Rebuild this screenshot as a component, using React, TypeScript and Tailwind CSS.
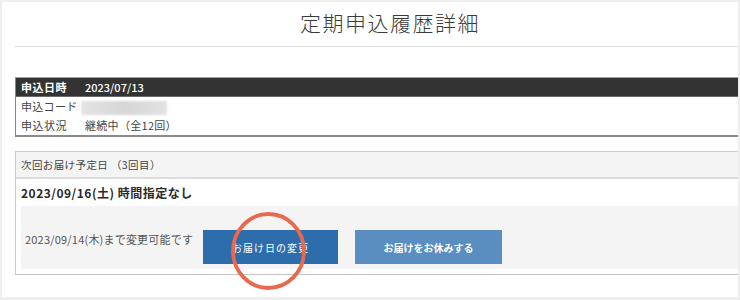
import React from "react";

export default function App() {
  return (
    <div className="w-[740px] h-[300px] bg-[#eeeeee] pt-[2px] pl-[2px] font-['Noto_Sans_CJK_JP','Noto_Sans',sans-serif] text-[#333]">
      <div className="relative h-[295px] w-[736px] bg-white overflow-hidden">
        <div className="pl-[13px]">
          <div className="h-[44px] flex items-center pl-[285px] pb-[3px]">
            <h1 className="text-[21px] leading-none tracking-[1.5px] font-light text-[#3a3a3a]">
              定期申込履歴詳細
            </h1>
          </div>
          <div className="h-px bg-[#dedede]" />

          <div className="mt-[30px] border-t border-t-[#a0a0a0] border-l border-l-[#888] border-b-2 border-b-[#8a8a8a]">
            <div className="h-[19px] bg-[#333] border-b border-b-[#6a6a6a] flex items-center text-white text-[11px] font-bold">
              <div className="w-[69px] pl-[5px] tracking-[0.5px]">申込日時</div>
              <div className="font-medium">2023/07/13</div>
            </div>
            <div className="h-[19px] flex items-center text-[11px] text-[#444]">
              <div className="w-[69px] pl-[5px] tracking-[0.3px]">申込コード</div>
              <div className="h-[14px] w-[86px] -ml-[4px] mt-[2px] rounded-[2px] bg-gradient-to-r from-[#e4e4e4] via-[#d6d6d6] to-[#e2e2e2] blur-[1px]" />
            </div>
            <div className="h-[19px] flex items-center text-[11px] text-[#444]">
              <div className="w-[69px] pl-[5px] tracking-[0.5px]">申込状況</div>
              <div className="tracking-[0.3px]">継続中（全12回）</div>
            </div>
          </div>

          <div className="mt-[14px] border-t border-t-[#c6cfcb] border-l border-l-[#cacaca] border-b border-b-[#c4c4c4]">
            <div className="h-[27px] bg-[#f4f4f4] border-b-2 border-b-[#dcdcdc] flex items-center pl-[5px] text-[10.5px] tracking-[0.4px] text-[#444]">
              次回お届け予定日 （3回目）
            </div>
            <div className="h-[27px] flex items-center pl-[5px] text-[12px] font-bold tracking-[0.5px] text-[#2a2a2a]">
              2023/09/16(土) 時間指定なし
            </div>
            <div className="pb-[5px]">
              <div className="ml-[5px] h-[63px] bg-[#f4f4f4] flex items-start pt-[24px] pl-[4px]">
                <div className="w-[178px] mt-[1px] leading-[16px] text-[11px] tracking-[0.2px] text-[#555]">
                  2023/09/14(木)まで変更可能です
                </div>
                <div className="w-[135px] h-[34px] bg-[#2e6dac] flex items-center justify-center text-white text-[10px] tracking-[1px]">
                  お届け日の変更
                </div>
                <div className="ml-[17px] w-[147px] h-[34px] bg-[#5a8ec0] flex items-center justify-center text-white text-[10px] font-bold">
                  お届けをお休みする
                </div>
              </div>
            </div>
          </div>
        </div>

        <svg
          className="absolute left-[226px] top-[206px]"
          width="82"
          height="86"
          viewBox="0 0 82 86"
        >
          <ellipse cx="40.5" cy="43" rx="35.5" ry="37" fill="none" stroke="#e8694d" strokeWidth="3.8" />
        </svg>
      </div>
    </div>
  );
}
